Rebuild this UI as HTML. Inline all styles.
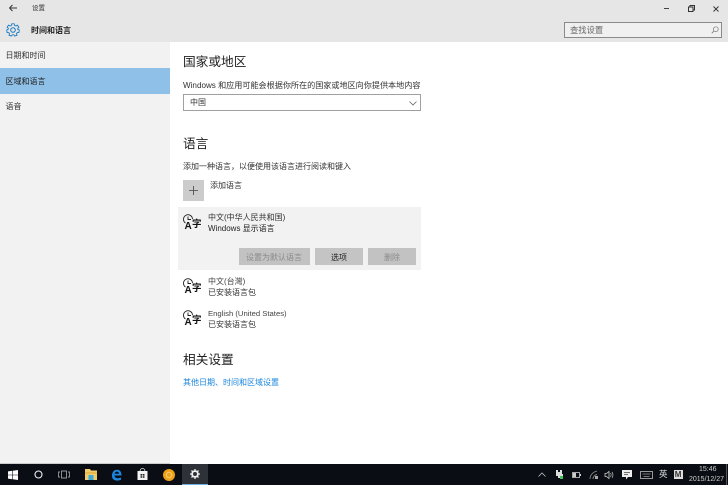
<!DOCTYPE html>
<html><head><meta charset="utf-8">
<style>
html,body{margin:0;padding:0}
body{width:728px;height:485px;overflow:hidden;background:#fff;position:relative;font-family:"Liberation Sans","Noto Sans CJK SC",sans-serif;color:#222}
#w{position:absolute;left:0;top:0;width:728px;height:485px;filter:blur(.35px);overflow:hidden}
.a{position:absolute;white-space:nowrap;line-height:1}
.r{position:absolute}
.t{font-size:8px}
.h{font-size:12.700px;color:#1f1f1f}
svg{position:absolute;overflow:visible}
</style></head><body><div id="w">
<div class="r" style="left:0;top:0;width:728px;height:42px;background:#e6e6e6"></div>
<div class="r" style="left:0;top:42px;width:170px;height:421px;background:#f2f2f2"></div>
<div class="r" style="left:0;top:68px;width:170px;height:26px;background:#8fc0e8"></div>

<svg style="left:9px;top:4px" width="8" height="8" viewBox="0 0 8 8"><path d="M.5 4H8M.5 4L3.500 1M.5 4L3.500 7" fill="none" stroke="#333" stroke-width="1"/></svg>
<div class="a" style="left:32px;top:6px;font-size:6.500px;color:#333">设置</div>
<svg style="left:6px;top:23px" width="14" height="14" viewBox="0 0 14 14"><circle cx="7" cy="7" r="2.300" fill="none" stroke="#1a7cc4" stroke-width="1"/><path d="M5.800 .8H8.200L8.600 2.400 10 3 11.400 2.100 12.900 4.200 11.700 5.300V6.200L13.300 7 12.900 9.600 11.300 9.600 10.400 10.800 11 12.200 8.700 13.100 7.800 11.800H6.200L5.300 13.100 3 12.200 3.600 10.800 2.700 9.600 1.100 9.600 .7 7 2.300 6.200V5.300L1.100 4.200 2.600 2.100 4 3 5.400 2.400Z" fill="none" stroke="#1a7cc4" stroke-width=".9"/></svg>
<div class="a" style="left:31px;top:26.500px;font-size:8px;font-weight:700;color:#222">时间和语言</div>

<div class="r" style="left:664px;top:8px;width:5px;height:1px;background:#444"></div>
<svg style="left:688px;top:4.500px" width="7" height="7" viewBox="0 0 7 7"><path d="M2 1.500V.5H6.500V5H5.500M.5 2H5V6.500H.5Z" fill="none" stroke="#333" stroke-width="1"/></svg>
<svg style="left:713px;top:6px" width="6" height="6" viewBox="0 0 6 6"><path d="M.5 .5L5.500 5.500M5.500 .5L.5 5.500" stroke="#333" stroke-width=".9"/></svg>

<div class="r" style="left:564px;top:22px;width:156px;height:14px;border:1px solid #8a8a8a;background:#f0f0f0"></div>
<div class="a" style="left:570px;top:25.500px;font-size:8.300px;color:#666">查找设置</div>
<svg style="left:711px;top:26px" width="8" height="8" viewBox="0 0 8 8"><circle cx="4.800" cy="3.200" r="2.400" fill="none" stroke="#777" stroke-width=".7"/><path d="M3 5L.8 7.200" stroke="#777" stroke-width=".8"/></svg>

<div class="a t" style="left:5.500px;top:52px;color:#333">日期和时间</div>
<div class="a t" style="left:5.500px;top:77.500px;color:#222">区域和语言</div>
<div class="a t" style="left:5.500px;top:103px;color:#333">语音</div>

<div class="a h" style="left:183px;top:56px">国家或地区</div>
<div class="a" style="left:183px;top:81.500px;font-size:8.100px;color:#333">Windows 和应用可能会根据你所在的国家或地区向你提供本地内容</div>
<div class="r" style="left:183px;top:94px;width:236px;height:15px;border:1px solid #a0a0a0;background:#fff"></div>
<div class="a t" style="left:190px;top:98.500px;color:#333">中国</div>
<svg style="left:409px;top:100.500px" width="8" height="5" viewBox="0 0 8 5"><path d="M.5 .5L4 4 7.500 .5" fill="none" stroke="#666" stroke-width=".8"/></svg>

<div class="a h" style="left:183px;top:137.500px">语言</div>
<div class="a t" style="left:183px;top:162.500px;color:#333">添加一种语言，以便使用该语言进行阅读和键入</div>
<div class="r" style="left:183px;top:180px;width:21px;height:21px;background:#ccc"></div>
<svg style="left:189px;top:186px" width="9" height="9" viewBox="0 0 9 9"><path d="M4.500 0V9M0 4.500H9" stroke="#444" stroke-width=".8"/></svg>
<div class="a t" style="left:210px;top:182px;color:#333">添加语言</div>

<div class="r" style="left:178px;top:207px;width:243px;height:63px;background:#f2f2f2"></div>
<svg style="left:184px;top:214px" width="18" height="19" viewBox="0 0 18 19"><g fill="none" stroke="#222" stroke-width=".9"><path d="M1.500 9A4.500 4.500 0 1 1 8.500 5"/><path d="M4 2.500V5.500H7"/></g></svg>
<div class="a" style="left:184.500px;top:222px;font-size:10px;font-weight:700;color:#111">A</div>
<div class="a" style="left:192px;top:220px;font-size:9.500px;font-weight:700;color:#111">字</div>
<div class="a t" style="left:208px;top:213.500px;color:#333">中文(中华人民共和国)</div>
<div class="a t" style="left:208px;top:224.500px;color:#222">Windows 显示语言</div>
<div class="r" style="left:239px;top:248px;width:71px;height:17px;background:#c2c2c2"></div>
<div class="a t" style="left:246px;top:253.500px;color:#8a8a8a">设置为默认语言</div>
<div class="r" style="left:315px;top:248px;width:48px;height:17px;background:#c4c4c4"></div>
<div class="a t" style="left:331px;top:253.500px;color:#222">选项</div>
<div class="r" style="left:368px;top:248px;width:48px;height:17px;background:#c2c2c2"></div>
<div class="a t" style="left:384px;top:253.500px;color:#8a8a8a">删除</div>

<svg style="left:184px;top:278px" width="18" height="19" viewBox="0 0 18 19"><g fill="none" stroke="#222" stroke-width=".9"><path d="M1.500 9A4.500 4.500 0 1 1 8.500 5"/><path d="M4 2.500V5.500H7"/></g></svg>
<div class="a" style="left:184.500px;top:286px;font-size:10px;font-weight:700;color:#111">A</div>
<div class="a" style="left:192px;top:284px;font-size:9.500px;font-weight:700;color:#111">字</div>
<div class="a t" style="left:208px;top:277.500px;color:#444">中文(台灣)</div>
<div class="a t" style="left:208px;top:288.500px;color:#333">已安装语言包</div>

<svg style="left:184px;top:310px" width="18" height="19" viewBox="0 0 18 19"><g fill="none" stroke="#222" stroke-width=".9"><path d="M1.500 9A4.500 4.500 0 1 1 8.500 5"/><path d="M4 2.500V5.500H7"/></g></svg>
<div class="a" style="left:184.500px;top:318px;font-size:10px;font-weight:700;color:#111">A</div>
<div class="a" style="left:192px;top:316px;font-size:9.500px;font-weight:700;color:#111">字</div>
<div class="a" style="left:208px;top:309.500px;font-size:7.700px;color:#444">English (United States)</div>
<div class="a t" style="left:208px;top:320.500px;color:#333">已安装语言包</div>

<div class="a h" style="left:183px;top:353.500px">相关设置</div>
<div class="a t" style="left:183px;top:378.500px;color:#1a86dd">其他日期、时间和区域设置</div>

<div class="r" style="left:0;top:463px;width:170px;height:1px;background:#ccc"></div>
<div class="r" style="left:0;top:464px;width:728px;height:21px;background:#0b0d14"></div>
<div class="r" style="left:182px;top:464px;width:26px;height:21px;background:#2e3138"></div>
<div class="r" style="left:182px;top:484px;width:26px;height:1px;background:#6fb0e0"></div>

<svg style="left:8px;top:470px" width="10" height="10" viewBox="0 0 10 10"><path d="M0 1.400L4.300 .8V4.700H0ZM4.900 .7L10 0V4.700H4.900ZM0 5.300H4.300V9.200L0 8.600ZM4.900 5.300H10V10L4.900 9.300Z" fill="#fff"/></svg>
<svg style="left:34px;top:470px" width="9" height="9" viewBox="0 0 9 9"><circle cx="4.500" cy="4.500" r="3.500" fill="none" stroke="#eee" stroke-width="1.100"/></svg>
<svg style="left:58px;top:470px" width="12" height="9" viewBox="0 0 12 9"><path d="M3.500 1H8.500V8H3.500ZM2 2H.5V7H2M10 2H11.500V7H10" fill="none" stroke="#999" stroke-width=".9"/></svg>
<svg style="left:84.500px;top:469px" width="12" height="11" viewBox="0 0 12 11"><path d="M0 0H5L6 1.500H12V11H0Z" fill="#f2cc6b"/><rect x="0" y="3" width="12" height="2" fill="#e8b84a"/><rect x="3.500" y="6" width="5" height="5" fill="#3fa9dc"/></svg>
<svg style="left:111px;top:468.500px" width="11" height="12" viewBox="0 0 11 12"><path d="M1 7C1 3 3 .8 6 .8C9 .8 10.500 3 10.500 6.500H3.500C3.500 9 6.500 10 10 8.500V10.800C6 12.500 1 11.500 1 7ZM3.600 4.700H8C8 2 4 2 3.600 4.700Z" fill="#1b86e0"/></svg>
<svg style="left:137px;top:468px" width="11" height="12" viewBox="0 0 11 12"><path d="M3 3.500C3 -.5 8 -.5 8 3.500" fill="none" stroke="#eee" stroke-width=".8"/><path d="M.5 3H10.500V12H.5Z" fill="#f4f4f4"/><path d="M3.500 6H5.200V7.600H3.500ZM5.800 6H7.500V7.600H5.800ZM3.500 8.200H5.200V9.800H3.500ZM5.800 8.200H7.500V9.800H5.800Z" fill="#222"/></svg>
<svg style="left:163px;top:469px" width="12" height="12" viewBox="0 0 12 12"><circle cx="6" cy="6" r="6" fill="#eea21a"/><circle cx="6" cy="6" r="2.700" fill="none" stroke="#f6cf70" stroke-width="1"/></svg>
<svg style="left:190px;top:469px" width="10" height="10" viewBox="0 0 10 10"><circle cx="5" cy="5" r="2.900" fill="none" stroke="#eee" stroke-width="1.800"/><path d="M5 0V2M5 8V10M0 5H2M8 5H10M1.500 1.500L2.800 2.800M7.200 7.200L8.500 8.500M8.500 1.500L7.200 2.800M2.800 7.200L1.500 8.500" stroke="#eee" stroke-width="1.300"/></svg>

<svg style="left:538px;top:472px" width="8" height="5" viewBox="0 0 8 5"><path d="M.5 4.500L4 1 7.500 4.500" fill="none" stroke="#bbb" stroke-width=".8"/></svg>
<svg style="left:555px;top:470px" width="8" height="10" viewBox="0 0 8 10"><path d="M1 0H3V2H5V0H7V4H8V6H5V8H3V6H1Z" fill="#ddd"/><rect x="5" y="6" width="3" height="3" fill="#3ec45a"/></svg>
<svg style="left:572px;top:472px" width="9" height="6" viewBox="0 0 9 6"><rect x=".5" y=".5" width="7" height="5" fill="none" stroke="#ccc" stroke-width=".8"/><rect x="1" y="1" width="3" height="4" fill="#ccc"/><rect x="8" y="2" width="1" height="2" fill="#ccc"/></svg>
<svg style="left:590px;top:471px" width="8" height="8" viewBox="0 0 8 8"><path d="M0 8C0 4 3 1 7 0M3 8C3 6 4.500 4 7 3.500" fill="none" stroke="#888" stroke-width=".9"/><rect x="5" y="5" width="3" height="3" fill="#aaa"/></svg>
<svg style="left:605px;top:471px" width="9" height="8" viewBox="0 0 9 8"><path d="M0 2.500H1.500L4 .5V7.500L1.500 5.500H0Z" fill="none" stroke="#ccc" stroke-width=".8"/><path d="M5.500 2C6.300 3 6.300 5 5.500 6M7 1C8.300 3 8.300 5 7 7" fill="none" stroke="#bbb" stroke-width=".7"/></svg>
<svg style="left:622px;top:470px" width="10" height="10" viewBox="0 0 10 10"><path d="M0 0H10V7H6L4 9.500V7H0Z" fill="#eee"/><path d="M2 2.500H8M2 4.500H6" stroke="#444" stroke-width=".7"/></svg>
<svg style="left:640px;top:471px" width="13" height="8" viewBox="0 0 13 8"><rect x=".5" y=".5" width="12" height="7" fill="none" stroke="#bbb" stroke-width=".8"/><path d="M2.500 3H10.500M3.500 5.500H9.500" stroke="#999" stroke-width=".8"/></svg>
<div class="a" style="left:659px;top:470px;font-size:8.500px;color:#ddd">英</div>
<div class="r" style="left:674px;top:470px;width:9px;height:9px;background:#ddd"></div>
<div class="a" style="left:674.700px;top:471px;font-size:8px;font-weight:700;color:#333">M</div>
<div class="a" style="left:699px;top:466px;font-size:7px;color:#ccc">15:46</div>
<div class="a" style="left:689px;top:475.500px;font-size:7px;color:#ccc">2015/12/27</div>
<div class="r" style="left:726px;top:464px;width:1px;height:21px;background:#555"></div>
</div></body></html>
